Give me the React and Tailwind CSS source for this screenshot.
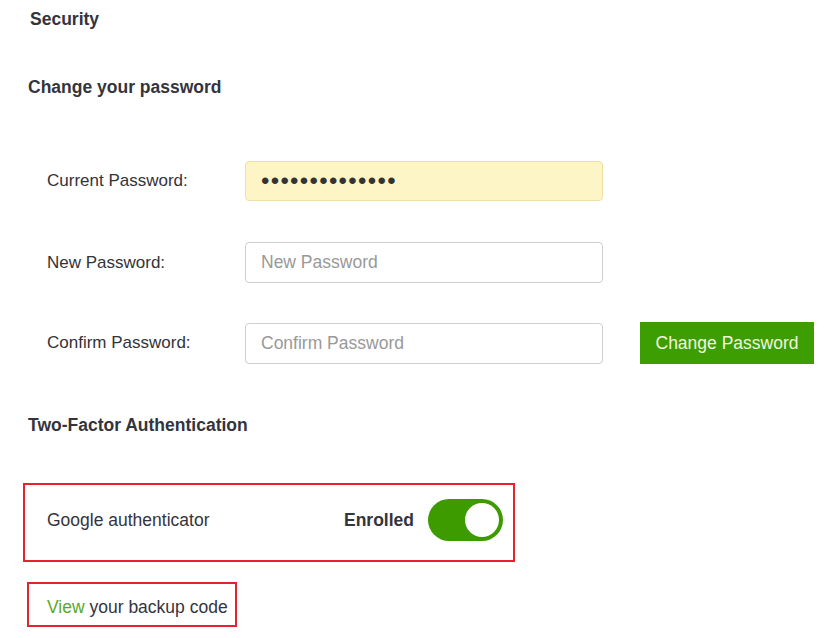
const font = { fontFamily: '"Liberation Sans", Arial, sans-serif' };

const Row = ({ label, children, extra }) => (
    <div className="flex items-center">
        <label className="w-[245px] shrink-0 pl-[47px] text-[17px] text-[#333338]">{label}</label>
        {children}
        {extra}
    </div>
);

const App = () => {
    return (
        <div className="w-[834px] h-[638px] bg-white text-[#34343c]" style={font}>
            {/* Header */}
            <p className="pl-[30px] pt-[10px] text-[17.5px] leading-[19px] font-bold">Security</p>
            <p className="pl-[28px] mt-[49px] text-[17.5px] leading-[19px] font-bold">Change your password</p>

            {/* Password form */}
            <div className="mt-[64px] flex flex-col">
                <Row label="Current Password:">
                    <input
                        type="password"
                        readOnly
                        value="aaaaaaaaaaaaaa"
                        className="w-[358px] h-[40px] px-[15px] rounded-[4px] border border-[#eedfa6] bg-[#fef5c6] text-[24px] tracking-[1.3px] text-[#333] outline-none"
                    />
                </Row>
                <div className="mt-[41px]">
                    <Row label="New Password:">
                        <input
                            type="password"
                            placeholder="New Password"
                            className="w-[358px] h-[41px] px-[15px] rounded-[4px] border border-[#cfcfcf] bg-white text-[17.5px] placeholder:text-[#999] outline-none"
                        />
                    </Row>
                </div>
                <div className="mt-[39px]">
                    <Row
                        label="Confirm Password:"
                        extra={
                            <button className="ml-[37px] w-[174px] h-[42px] shrink-0 bg-[#3c9e02] text-[#f1f6df] text-[17.5px]">
                                Change Password
                            </button>
                        }
                    >
                        <input
                            type="password"
                            placeholder="Confirm Password"
                            className="w-[358px] h-[41px] px-[15px] rounded-[4px] border border-[#cfcfcf] bg-white text-[17.5px] placeholder:text-[#999] outline-none"
                        />
                    </Row>
                </div>
            </div>

            {/* Two-factor */}
            <p className="pl-[28px] mt-[52px] text-[17.5px] leading-[19px] font-bold">Two-Factor Authentication</p>

            <div className="ml-[23px] mt-[48px] w-[492px] h-[79px] border-2 border-[#e8212f] flex items-center pl-[22px] pr-[10px] pb-[5px]">
                <span className="text-[17.5px]">Google authenticator</span>
                <span className="ml-auto text-[17.5px] font-bold">Enrolled</span>
                <div className="ml-[14px] w-[75px] h-[42px] rounded-full bg-[#3d9b00] flex items-center justify-end pr-[4px]">
                    <div className="w-[34px] h-[34px] rounded-full bg-white"></div>
                </div>
            </div>

            <div className="ml-[27px] mt-[20px] w-[210px] h-[45px] border-2 border-[#e8212f] flex items-center pl-[18px] pt-[6px]">
                <span className="text-[17.5px]">
                    <span className="text-[#5ca91c]">View</span> your backup code
                </span>
            </div>
        </div>
    );
};

export default App;
